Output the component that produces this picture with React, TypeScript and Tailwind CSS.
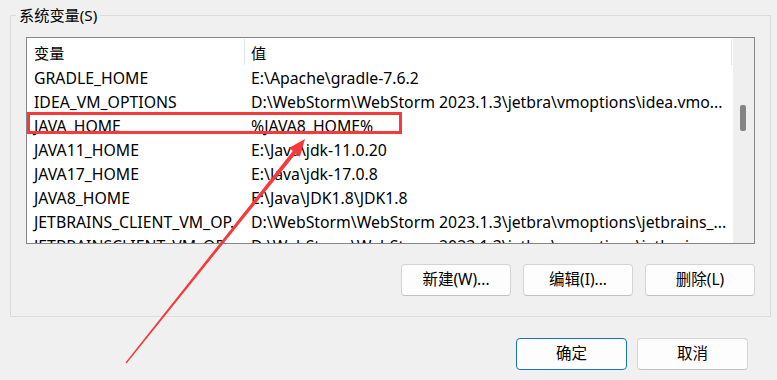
import React from 'react';

interface EnvVar {
  name: string;
  value: string;
}

const vars: EnvVar[] = [
  { name: 'GRADLE_HOME', value: String.raw`E:\Apache\gradle-7.6.2` },
  { name: 'IDEA_VM_OPTIONS', value: String.raw`D:\WebStorm\WebStorm 2023.1.3\jetbra\vmoptions\idea.vmo...` },
  { name: 'JAVA_HOME', value: '%JAVA8_HOME%' },
  { name: 'JAVA11_HOME', value: String.raw`E:\Java\jdk-11.0.20` },
  { name: 'JAVA17_HOME', value: String.raw`E:\Java\jdk-17.0.8` },
  { name: 'JAVA8_HOME', value: String.raw`E:\Java\JDK1.8\JDK1.8` },
  { name: 'JETBRAINS_CLIENT_VM_OP.', value: String.raw`D:\WebStorm\WebStorm 2023.1.3\jetbra\vmoptions\jetbrains_...` },
  { name: 'JETBRAINSCLIENT_VM_OP...', value: String.raw`D:\WebStorm\WebStorm 2023.1.3\jetbra\vmoptions\jetbrains...` },
];

function WinButton({ label, primary = false, width = 'w-[110px]' }: { label: string; primary?: boolean; width?: string }) {
  return (
    <button
      className={
        primary
          ? `${width} h-[32px] rounded-[4px] bg-[#fdfdfd] border border-[#1a73c2] text-[15.5px] text-black`
          : `${width} h-[32px] rounded-[4px] bg-[#fdfdfd] border border-[#d4d4d4] border-b-[#c2c2c2] text-[15.5px] text-black`
      }
    >
      {label}
    </button>
  );
}

export default function App() {
  return (
    <div className="relative w-[777px] h-[380px] overflow-hidden bg-[#f0f0f0] text-[15.8px] text-black font-['Noto_Sans','Noto_Sans_CJK_SC',sans-serif]">
      {/* group box */}
      <div className="relative ml-[10px] mt-[15px] w-[761px] h-[302px] border border-[#dcdcdc] pt-[21px] px-[15px] pb-[20px] flex flex-col">
        <span className="absolute left-[5px] top-[-11px] px-[3px] bg-[#f0f0f0] leading-[20px] text-[15.2px]">系统变量(S)</span>

        <div className="w-[729px] h-[207px] border border-[#878787] bg-white flex overflow-hidden">
          <div className="flex-1 flex flex-col min-w-0">
            <div className="h-[27px] shrink-0 flex">
              <div className="w-[218px] pl-[7px] pt-[2px] flex items-center border-r border-[#e5e5e5] mt-[1px] text-[15.2px]">变量</div>
              <div className="w-[487px] pl-[6px] pt-[2px] flex items-center border-r border-[#e5e5e5] mt-[1px] text-[15.2px]">值</div>
            </div>
            {vars.map((v) => (
              <div key={v.name} className="h-[24px] shrink-0 pt-[3px] flex items-center">
                <div className="w-[218px] pl-[7px] whitespace-nowrap overflow-hidden">{v.name}</div>
                <div className="flex-1 pl-[6px] whitespace-nowrap overflow-hidden">{v.value}</div>
              </div>
            ))}
          </div>
          <div className="w-[21px] shrink-0 bg-[#efefef]">
            <div className="mt-[67px] ml-[7px] w-[6px] h-[26px] rounded-[2px] bg-[#858585]" />
          </div>
        </div>

        <div className="mt-[20px] flex justify-end gap-[12px]">
          <WinButton label="新建(W)..." />
          <WinButton label="编辑(I)..." />
          <WinButton label="删除(L)" />
        </div>
      </div>

      <div className="mt-[21px] pr-[29px] flex justify-end gap-[10px]">
        <WinButton label="确定" primary width="w-[111px]" />
        <WinButton label="取消" width="w-[111px]" />
      </div>

      {/* annotation */}
      <div className="absolute left-[27px] top-[112px] w-[375px] h-[22px] border-[3px] border-[#f53a3a] pointer-events-none" />
      <svg className="absolute left-0 top-0 pointer-events-none" width="777" height="380" viewBox="0 0 777 380">
        <polygon
          points="125.5,362.6 292.8,151.1 288.9,147.9 305,139 299.9,156.7 296,153.5 126.5,363.4"
          fill="#f7393a"
        />
      </svg>
    </div>
  );
}
